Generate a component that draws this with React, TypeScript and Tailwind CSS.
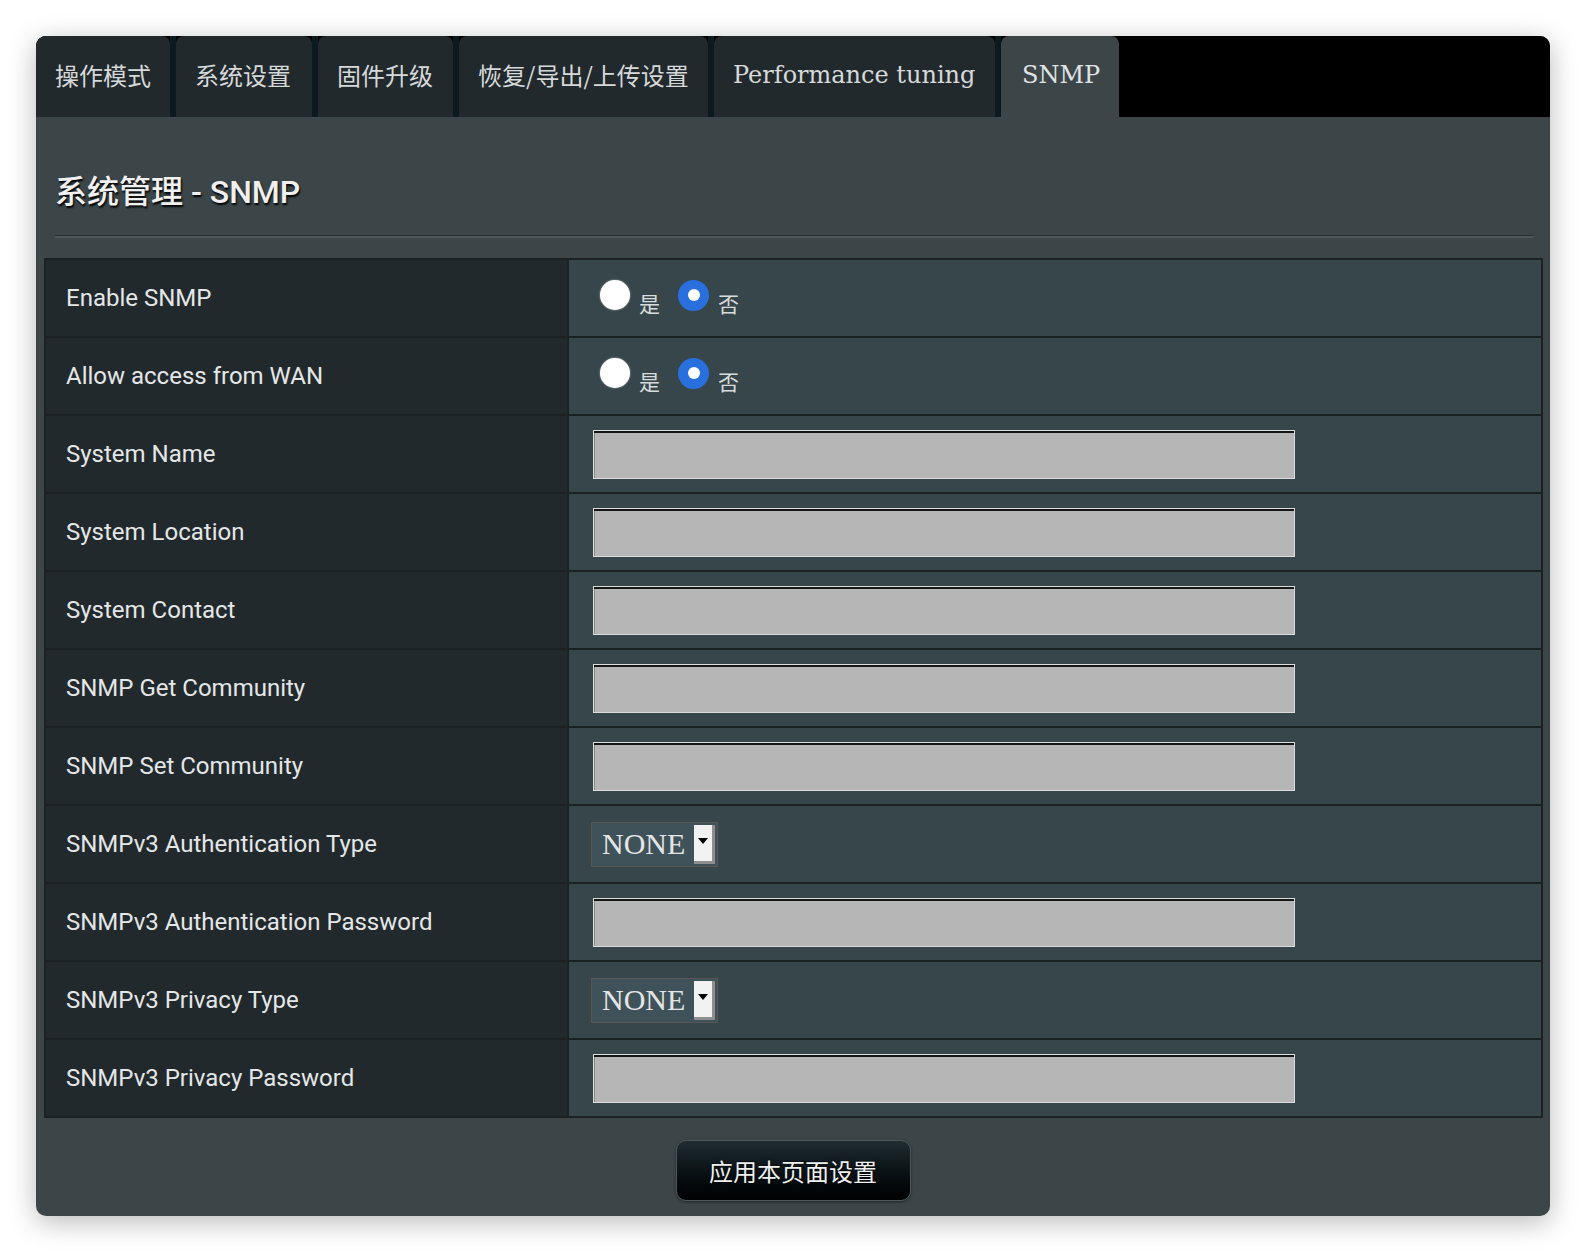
import React from "react";

type Row =
  | { label: string; kind: "radio" }
  | { label: string; kind: "input" }
  | { label: string; kind: "select" };

const rows: Row[] = [
  { label: "Enable SNMP", kind: "radio" },
  { label: "Allow access from WAN", kind: "radio" },
  { label: "System Name", kind: "input" },
  { label: "System Location", kind: "input" },
  { label: "System Contact", kind: "input" },
  { label: "SNMP Get Community", kind: "input" },
  { label: "SNMP Set Community", kind: "input" },
  { label: "SNMPv3 Authentication Type", kind: "select" },
  { label: "SNMPv3 Authentication Password", kind: "input" },
  { label: "SNMPv3 Privacy Type", kind: "select" },
  { label: "SNMPv3 Privacy Password", kind: "input" },
];

function RadioPair() {
  return (
    <div className="flex items-center pl-[31px]">
      <span className="-mt-[6px] w-[30px] h-[30px] rounded-full bg-white shadow-[0_0_2px_rgba(255,255,255,0.6)]" />
      <span className="ml-[9px] mt-[10px] text-[21px] leading-none text-[#d8dcdd] font-['Noto_Sans_CJK_SC',sans-serif]">是</span>
      <span className="-mt-[6px] ml-[18px] w-[31px] h-[31px] rounded-full bg-[#2a6fde] flex items-center justify-center">
        <span className="w-[12px] h-[12px] rounded-full bg-white" />
      </span>
      <span className="ml-[9px] mt-[10px] text-[21px] leading-none text-[#d8dcdd] font-['Noto_Sans_CJK_SC',sans-serif]">否</span>
    </div>
  );
}

function TextInput() {
  return (
    <div className="ml-[24px] w-[702px] h-[49px] bg-[#b6b6b6] border border-[#dcdcdc] shadow-[inset_0_2px_0_#161616,inset_1px_0_0_#8a8a8a]" />
  );
}

function SelectBox() {
  return (
    <div className="ml-[22px] flex items-stretch h-[45px] w-[127px] bg-[#3f525a] border border-[#5a5656]">
      <span className="flex-1 flex items-center pl-[10px] text-[30px] leading-none text-[#e4e6e6] font-['Liberation_Serif',serif]">
        NONE
      </span>
      <span className="my-[2px] mr-[2px] w-[21px] bg-[#f2f2f2] border-r-[3px] border-b-[3px] border-[#8e8e8e] flex items-start justify-center pt-[13px]">
        <svg width="10" height="7" viewBox="0 0 10 7">
          <path d="M0 0 L10 0 L5 6 Z" fill="#000" />
        </svg>
      </span>
    </div>
  );
}

const tabs = [
  { label: "操作模式", w: "w-[134px]", serif: false },
  { label: "系统设置", w: "w-[136px]", serif: false },
  { label: "固件升级", w: "w-[135px]", serif: false },
  { label: "恢复/导出/上传设置", w: "w-[249px]", serif: false },
  { label: "Performance tuning", w: "w-[281px]", serif: true },
];

export default function App() {
  return (
    <div className="min-h-screen bg-white pt-[36px] pl-[36px]">
      <div className="w-[1514px] h-[1180px] rounded-[10px] overflow-hidden bg-[#3c4649] shadow-[0_6px_28px_rgba(0,0,0,0.28)] flex flex-col">
        {/* Tab bar */}
        <div className="h-[81px] bg-black flex shrink-0">
          {tabs.map((t) => (
            <React.Fragment key={t.label}>
              <div
                className={`${t.w} h-full bg-[#22292d] rounded-t-[8px] flex items-center pl-[19px] pb-[4px] text-[#d6d9da] whitespace-nowrap ${
                  t.serif
                    ? "text-[24px] font-['DejaVu_Serif',serif]"
                    : "text-[24px] font-['Noto_Sans_CJK_SC',sans-serif]"
                }`}
              >
                {t.label}
              </div>
              <div className="w-[6px] h-full bg-[#0c1a20]" />
            </React.Fragment>
          ))}
          <div className="w-[118px] h-full bg-[#3c4649] rounded-t-[8px] flex items-center pl-[21px] pb-[4px] text-[24px] text-[#e0e3e4] font-['DejaVu_Serif',serif]">
            SNMP
          </div>
        </div>

        {/* Content */}
        <div className="flex-1 flex flex-col">
          <div className="pt-[55px] pl-[19px] h-[40px] box-content">
            <h1 className="text-[32px] leading-[40px] text-[#f0f0f0] font-['Roboto','Noto_Sans_CJK_SC',sans-serif] font-medium [text-shadow:1px_2px_2px_#000]">
              系统管理 - SNMP
            </h1>
          </div>
          <div className="mt-[23px] ml-[19px] mr-[17px] h-[3px] border-t border-[#283034] bg-[#4b575b]" />

          <div className="mt-[20px] ml-[8px] mr-[7px] border-t-2 border-x-2 border-[#1c2224]">
            {rows.map((r) => (
              <div key={r.label} className="flex h-[78px] border-b-2 border-[#1c2224]">
                <div className="w-[523px] shrink-0 bg-[#22292c] border-r-2 border-[#1c2224] flex items-center pl-[20px] text-[24px] text-[#e4e7e8] font-['Roboto',sans-serif]">
                  {r.label}
                </div>
                <div className="flex-1 bg-[#37464b] flex items-center">
                  {r.kind === "radio" && <RadioPair />}
                  {r.kind === "input" && <TextInput />}
                  {r.kind === "select" && <SelectBox />}
                </div>
              </div>
            ))}
          </div>

          <div className="mt-[22px] flex justify-center">
            <button className="w-[235px] h-[61px] rounded-[10px] border border-[#4e585b] bg-gradient-to-b from-[#1f2c30] to-[#010203] shadow-[0_1px_3px_rgba(0,0,0,0.5)] text-[24px] text-[#eef0f0] font-['Noto_Sans_CJK_SC',sans-serif] [text-shadow:0_0_2px_#000]">
              应用本页面设置
            </button>
          </div>
        </div>
      </div>
    </div>
  );
}
